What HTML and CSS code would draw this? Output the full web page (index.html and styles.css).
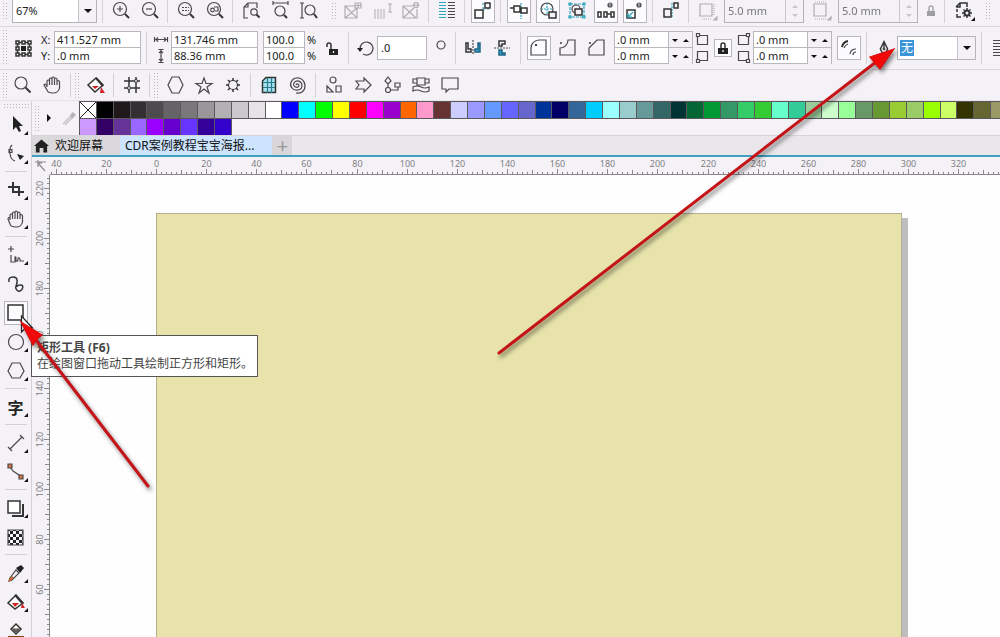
FILE: index.html
```html
<!DOCTYPE html>
<html lang="zh-CN">
<head>
<meta charset="utf-8">
<title>CorelDRAW</title>
<link rel="stylesheet" href="styles.css">
</head>
<body>
<div class="app">
<header class="bars">
  <div class="bar bar-standard" role="toolbar" aria-label="标准">
    <span class="grip"></span>
    <span class="combo combo-zoom"><select class="combo-select" aria-label="缩放级别"><option>67%</option></select><span class="combo-arrow"></span></span>
    <span class="sep"></span>
    <button class="btn" aria-label="放大"><svg viewBox="0 0 24 24"><circle cx="11" cy="10" r="6.5"/><path d="M8 10h6M11 7v6"/><path class="thick" d="M16 15l4 4"/></svg></button>
    <button class="btn" aria-label="缩小"><svg viewBox="0 0 24 24"><circle cx="11" cy="10" r="6.5"/><path d="M8 10h6"/><path class="thick" d="M16 15l4 4"/></svg></button>
    <span class="sep"></span>
    <button class="btn" aria-label="缩放选定对象"><svg viewBox="0 0 24 24"><circle cx="11" cy="10" r="6.5"/><path stroke-dasharray="2 1" d="M8 8.500h7M8 11.500h7"/><path class="thick" d="M16 15l4 4"/></svg></button>
    <button class="btn" aria-label="缩放全部对象"><svg viewBox="0 0 24 24"><circle cx="11" cy="10" r="6.500"/><circle cx="9.500" cy="11" r="1.800"/><path d="M11 8h4v4h-3"/><path class="thick" d="M16 15l4 4"/></svg></button>
    <span class="sep"></span>
    <button class="btn" aria-label="显示页面"><svg viewBox="0 0 24 24"><path d="M9 19H5V8l4-4h9v5M5 8h4V4"/><circle cx="15" cy="13" r="3.200"/><path class="thick" d="M17.500 15.500l3 3"/></svg></button>
    <button class="btn" aria-label="页宽"><svg viewBox="0 0 24 24"><path d="M5 4h15M5 2v4M20 2v4"/><circle cx="12" cy="12" r="5"/><path class="thick" d="M16 16l3 3"/></svg></button>
    <button class="btn" aria-label="页高"><svg viewBox="0 0 24 24"><path d="M5 4v15M3 4h4M3 19h4"/><circle cx="13" cy="11" r="5"/><path class="thick" d="M17 15l3 4"/></svg></button>
    <span class="grip grip-group"></span>
    <button class="btn off" aria-label="添加" disabled><svg viewBox="0 0 24 24"><path d="M15 7H4v12h12V9M4 7l12 12M16 9L4 19M14 4h6v5h-6zM17 4v5M14 6.500h6"/></svg></button>
    <button class="btn off" aria-label="编辑" disabled><svg viewBox="0 0 24 24"><path stroke-dasharray="2 1" d="M4 11h12M4 13h12M4 15h12M4 17h12M4 19h12"/><path d="M18 5h4M20 5v8M18 13h4"/></svg></button>
    <button class="btn off" aria-label="删除" disabled><svg viewBox="0 0 24 24"><path d="M14 7H4v12h14V10M4 7l13 12M15 9L4 19"/><circle cx="17" cy="6" r="2.500"/><path d="M15 6h4"/></svg></button>
    <span class="sep"></span>
    <button class="btn" aria-label="对齐"><svg viewBox="0 0 24 24"><path class="teal" d="M4 3.500h7M4 6.500h7M4 9.500h7M4 12.500h7M4 15.500h7M4 18.500h7"/><path d="M13 3.500h7M13 6.500h7M13 9.500h7M13 12.500h7M13 15.500h7M13 18.500h7"/></svg></button>
    <span class="sep"></span>
    <button class="btn boxed" aria-label="贴齐"><svg viewBox="0 0 24 24"><path class="teal" stroke-dasharray="2 2" d="M12 4v6M12 10h6"/><path class="mid" d="M4 11h8v8H4zM14 4h5v5h-5z"/></svg></button>
    <span class="sep"></span>
    <button class="btn boxed" aria-label="对象贴齐"><svg viewBox="0 0 24 24"><path class="teal" stroke-dasharray="2 1" d="M14 4v16"/><path class="mid" d="M7 7h6v6H7zM14 9h6v5h-6zM3 9h4"/></svg></button>
    <button class="btn boxed" aria-label="相交"><svg viewBox="0 0 24 24"><path class="teal" stroke-dasharray="2 1" d="M11 4v12M5 10h12"/><circle cx="11" cy="10" r="6"/><path class="mid" fill="#f4f2f6" d="M13 13h7v6h-7z"/></svg></button>
    <button class="btn" aria-label="选择框"><svg viewBox="0 0 24 24"><path class="teal" stroke-dasharray="3 1" d="M5 5h14v13H5z"/><circle cx="11" cy="10" r="4"/><path class="mid" fill="#f4f2f6" d="M10 10h7v6h-7z"/><path class="teal" d="M4 4h2v2H4zM18 4h2v2h-2zM4 17h2v2H4zM18 17h2v2h-2z"/></svg></button>
    <button class="btn boxed" aria-label="间距"><svg viewBox="0 0 24 24"><path class="mid" d="M4 13h3v5H4zM10 13h3v5h-3zM17 13h3v5h-3zM13 15h4"/><circle cx="16" cy="6" r="2"/><path d="M14 6h4"/></svg></button>
    <button class="btn boxed" aria-label="尺寸"><svg viewBox="0 0 24 24"><path class="mid" d="M4 11h8v8H4z"/><path class="teal" d="M5 18l5-5M5 14v4h4"/><circle cx="16" cy="6" r="2"/><path d="M14 6h4"/></svg></button>
    <span class="sep"></span>
    <button class="btn" aria-label="边缘"><svg viewBox="0 0 24 24"><path class="teal" stroke-dasharray="2 1" d="M13 4v15"/><path class="mid" d="M5 10h7v8H5zM15 4h4v5h-4z"/></svg></button>
    <span class="sep"></span>
    <button class="btn off" aria-label="水平偏移" disabled><svg viewBox="0 0 24 24"><path d="M5 5h12v12H5z"/><path stroke-dasharray="1 1" d="M19 5v12M7 20h10"/><path d="M22 18v3h-3z"/></svg></button>
    <span class="num off"><input class="num-input" aria-label="水平偏移值" value="5.0 mm" disabled><span class="updown"></span></span>
    <button class="btn off" aria-label="垂直偏移" disabled><svg viewBox="0 0 24 24"><path d="M5 5h12v12H5z"/><path stroke-dasharray="1 1" d="M6 3h11M6 20h11"/><path d="M22 18v3h-3z"/></svg></button>
    <span class="num off"><input class="num-input" aria-label="垂直偏移值" value="5.0 mm" disabled><span class="updown"></span></span>
    <button class="btn slim off" aria-label="锁定偏移" disabled><svg viewBox="0 0 16 24"><path class="mid" d="M6 12V9a2 2 0 0 1 4 0v3"/><path class="fill" d="M4 12h8v5H4z"/></svg></button>
    <span class="sep"></span>
    <button class="btn fly" aria-label="选项"><svg viewBox="0 0 24 24"><path class="mid" d="M10 18H6v-3M6 13v-3M5 8h4V4M5 8l4-4h7v4"/><circle class="thick" cx="16" cy="14" r="2.500"/><path class="mid" d="M16 9v2M16 17v2M11 14h2M19 14h2M12.500 10.500l1 1M18 16l1.500 1.500M19.500 10.500l-1 1M12.500 17.500l1-1"/></svg></button>
    <span class="grip grip-group"></span>
  </div>

  <div class="bar bar-property" role="toolbar" aria-label="属性栏">
    <span class="grip"></span>
    <button class="btn" aria-label="对象原点"><svg viewBox="0 0 24 24"><path class="mid" d="M4 5h3v3H4zM10 5h3v3h-3zM16 5h3v3h-3zM4 11h3v3H4zM16 11h3v3h-3zM4 17h3v3H4zM10 17h3v3h-3zM16 17h3v3h-3zM7 6.500h3M13 6.500h3M7 18.500h3M13 18.500h3M5.500 8v3M5.500 14v3M17.500 8v3M17.500 14v3"/><path class="fill" d="M9 10h5v5H9z"/></svg></button>
    <div class="pair">
      <div class="stack-labels"><label for="pos-x">X:</label><label for="pos-y">Y:</label></div>
      <div class="stack stack-wide"><input id="pos-x" value="411.527 mm"><input id="pos-y" value=".0 mm"></div>
    </div>
    <span class="sep"></span>
    <div class="pair">
      <svg class="size-icon" viewBox="0 0 16 34"><path d="M1.500 6v5M14.500 6v5M2 8.500h12M5 6.500l-2 2 2 2M11 6.500l2 2-2 2M8 19v12M5.500 18.500h5M5.500 31.500h5M6 22l2-2 2 2M6 28l2 2 2-2"/></svg>
      <div class="stack stack-wide"><input aria-label="宽度" value="131.746 mm"><input aria-label="高度" value="88.36 mm"></div>
    </div>
    <div class="pair">
      <div class="stack stack-scale"><input id="scale-x" value="100.0"><input id="scale-y" value="100.0"></div>
      <div class="stack-labels"><label for="scale-x">%</label><label for="scale-y">%</label></div>
    </div>
    <button class="btn narrow" aria-label="锁定比率"><svg viewBox="0 0 20 24"><path class="mid" d="M8 13V9a2 2 0 0 0-4 0v2"/><path class="fill" d="M6 13h9v6H6z"/><path stroke="#fff" d="M10.500 15v2"/></svg></button>
    <span class="sep"></span>
    <div class="pair">
      <button class="btn narrow" aria-label="旋转"><svg viewBox="0 0 20 24"><path d="M5 13a6.500 6.500 0 1 1 3 5"/><path class="fill" d="M2 12h6l-3 4z"/></svg></button>
      <input class="angle" aria-label="旋转角度" value=".0">
    </div>
    <svg class="degree" viewBox="0 0 18 24"><circle cx="9" cy="9" r="4"/></svg>
    <span class="sep"></span>
    <button class="btn" aria-label="水平镜像"><svg viewBox="0 0 24 24"><path class="mid" d="M4 7h2v6h3v3H4z"/><path class="mid blue" d="M18 7h-2v6h-3v3h5z"/><path stroke-dasharray="2 1" d="M11 4v15"/></svg></button>
    <button class="btn" aria-label="垂直镜像"><svg viewBox="0 0 24 24"><path class="mid" d="M14 5H8v5h3V8h3z"/><path class="mid blue" d="M14 19H8v-5h3v3h3z"/><path stroke-dasharray="2 1" d="M3 12h16"/></svg></button>
    <span class="sep"></span>
    <button class="btn boxed" aria-label="圆角"><svg viewBox="0 0 24 24"><path d="M4 19v-7a8 8 0 0 1 8-8h7v15z"/><path class="mid" d="M8 9h2M9 8v2"/></svg></button>
    <button class="btn" aria-label="扇形角"><svg viewBox="0 0 24 24"><path d="M4 19v-7a8 8 0 0 0 8-8h7v15zM4 7h2M5 6v2"/></svg></button>
    <button class="btn" aria-label="倒棱角"><svg viewBox="0 0 24 24"><path d="M4 19v-7l8-8h7v15zM4 7h2M5 6v2"/></svg></button>
    <div class="pair">
      <div class="stack stack-corner"><span class="spin"><input aria-label="左上角半径" value=".0 mm"><i class="down"></i><i class="up"></i></span><span class="spin"><input aria-label="左下角半径" value=".0 mm"><i class="down"></i><i class="up"></i></span></div>
      <svg class="corner-icon" viewBox="0 0 14 34"><path d="M4 4.500h8.500v9h-10V6M4 29.500h8.500v-9h-10V28M1.500 2.500h3v3h-3zM1.500 28.500h3v3h-3z"/></svg>
    </div>
    <button class="btn boxed lock" aria-label="同时编辑所有角"><svg viewBox="0 0 18 18"><path class="mid" d="M7 9V6a2 2 0 0 1 4 0v3"/><path class="fill" d="M4 9h10v6H4z"/><path stroke="#fff" d="M9 11v2"/></svg></button>
    <div class="pair">
      <svg class="corner-icon" viewBox="0 0 14 34"><path d="M10 4.500H1.500v9h10V6M10 29.500H1.500v-9h10V28M9.500 2.500h3v3h-3zM9.500 28.500h3v3h-3z"/></svg>
      <div class="stack stack-corner"><span class="spin"><input aria-label="右上角半径" value=".0 mm"><i class="down"></i><i class="up"></i></span><span class="spin"><input aria-label="右下角半径" value=".0 mm"><i class="down"></i><i class="up"></i></span></div>
    </div>
    <button class="btn boxed" aria-label="相对角缩放"><svg viewBox="0 0 24 24"><path class="thick" d="M5 11q1-5 6-6"/><path d="M7 12q1-3 4-4M13 18q1-5 6-5M16 19q0-3 3-3"/></svg></button>
    <span class="sep"></span>
    <div class="pair">
      <svg class="pen-icon" viewBox="0 0 24 24" role="img" aria-label="轮廓宽度"><path class="mid" d="M12 5l4 8-2 4h-4l-2-4zM12 7v6M9 19h6"/><circle cx="12" cy="13" r="1"/></svg>
      <span class="combo combo-outline"><select class="combo-select" aria-label="轮廓宽度"><option>无</option></select><span class="combo-arrow"></span></span>
    </div>
    <span class="sep"></span>
    <button class="btn" aria-label="文本换行"><svg viewBox="0 0 24 24"><path d="M5 4.500h18M5 7.500h18M5 10.500h18M5 13.500h18M5 16.500h18M5 19.500h18"/></svg></button>
  </div>

  <div class="bar bar-shapes" role="toolbar" aria-label="形状">
    <span class="grip"></span>
    <button class="btn" aria-label="缩放"><svg viewBox="0 0 24 24"><circle cx="9" cy="10" r="6"/><path class="thick" d="M13.500 14.500l5 5"/></svg></button>
    <button class="btn" aria-label="平移"><svg viewBox="0 0 24 24"><path d="M6 14V8q1-2 2.500 0v4V6q1-2 2.500 0v6V5q1-2 2.500 0v7V6q1-2 2.500 0v6V8q2-1 2.500 1v6q-1 5-6.500 5t-6-3l-3-5q1-2 3 1"/></svg></button>
    <span class="sep"></span>
    <span class="grip grip-next"></span>
    <button class="btn" aria-label="填充"><svg viewBox="0 0 24 24"><path class="mid" fill="#fff" d="M12 5l7 7-8 7-7-7z"/><path class="thick" d="M12 5l7 8"/><path class="red" d="M8 13h7l-4 3zM17 14l4 6h-5z"/></svg></button>
    <span class="sep"></span>
    <button class="btn" aria-label="网格"><svg viewBox="0 0 24 24"><path class="mid" d="M4 8h16M4 15h16M9 4v16M16 4v16"/><circle fill="#f4f2f6" cx="16" cy="8" r="1.500"/><circle fill="#f4f2f6" cx="9" cy="15" r="1.500"/></svg></button>
    <span class="sep"></span>
    <span class="grip grip-next"></span>
    <button class="btn" aria-label="多边形"><svg viewBox="0 0 24 24"><path d="M9 4h7l4 8-4 8H9l-4-8z"/></svg></button>
    <button class="btn" aria-label="星形"><svg viewBox="0 0 24 24"><path d="M12 5l2 5.500h6l-5 3.500 2 6-5-4-5 4 2-6-5-3.500h6z"/></svg></button>
    <button class="btn" aria-label="复杂星形"><svg viewBox="0 0 24 24"><circle cx="12" cy="12" r="4.500"/><path class="mid" d="M12 5v3M12 16v3M5 12h3M16 12h3M7 7l2 2M17 7l-2 2M7 17l2-2M17 17l-2-2"/></svg></button>
    <span class="sep"></span>
    <button class="btn" aria-label="图纸"><svg viewBox="0 0 24 24"><path class="mid sky" d="M9 4.500h9.500v15h-13V8z"/><path stroke="#287b91" d="M6 9.500h12M6 14.500h12M10.500 5v15M14.500 5v15"/></svg></button>
    <button class="btn" aria-label="螺纹"><svg viewBox="0 0 24 24"><path d="M10 20c5 1 9-2 9-7 0-6-5-9-9-8-5 1-7 7-4 10 3 4 10 2 10-2 0-5-6-7-8-3-2 3 3 6 5 3 0-2-2-3-3-1"/></svg></button>
    <span class="sep"></span>
    <button class="btn" aria-label="基本形状"><svg viewBox="0 0 24 24"><circle cx="11" cy="7" r="3"/><path d="M5 13v6h6zM14 13h5v6h-5z"/></svg></button>
    <button class="btn" aria-label="箭头形状"><svg viewBox="0 0 24 24"><path d="M5 8h8V5l7 7-7 7v-3H5l3-4z"/></svg></button>
    <button class="btn" aria-label="流程图形状"><svg viewBox="0 0 24 24"><path d="M8 4l3 4-3 3-3-3zM8 11v4M11 17h3M15 10h5v4h-5zM18 14v3h-4"/><circle cx="8" cy="17" r="2.500"/></svg></button>
    <button class="btn" aria-label="标题形状"><svg viewBox="0 0 24 24"><path d="M8 5h8v7H8zM8 6H4v4h4M16 6h4v4h-4M4 14q4-2 8 0t8 0v4q-4 2-8 0t-8 0z"/></svg></button>
    <button class="btn" aria-label="标注形状"><svg viewBox="0 0 24 24"><path d="M4 5h16v11h-9l-3 3v-3H4z"/></svg></button>
  </div>
</header>

<div class="workspace">
  <nav class="toolbox" aria-label="工具箱">
    <span class="grip-row"></span>
    <button class="btn fly" aria-label="选择工具"><svg viewBox="0 0 24 24"><path class="fill" d="M9 3v14l3-3 3 5 2-1-2-5h4z"/></svg></button>
    <button class="btn fly" aria-label="形状工具"><svg viewBox="0 0 24 24"><path d="M8 3q-3 3-2 9t5 7M5 7.500h3v3H5z"/><path class="fill" d="M13 12l7 2-4 4z"/></svg></button>
    <span class="rule"></span>
    <button class="btn fly" aria-label="裁剪工具"><svg viewBox="0 0 24 24"><path class="thick" d="M4 9h11v9M9 4v10h11"/></svg></button>
    <button class="btn fly" aria-label="平移工具"><svg viewBox="0 0 24 24"><path d="M6 13V8q1-2 2.500 0v4V6q1-2 2.500 0v6V5q1-2 2.500 0v7V6q1-2 2.500 0v6V8q2-1 2.500 1v6q-1 5-6.500 5t-6-3l-2-5q0-2 2-1"/></svg></button>
    <span class="rule"></span>
    <button class="btn fly" aria-label="手绘工具"><svg viewBox="0 0 24 24"><path d="M4 6h6M7 3v6M7 12v7h4v-5q1-1 1 2v2q2 1 2-2t2 0v2h4"/></svg></button>
    <button class="btn" aria-label="艺术笔工具"><svg viewBox="0 0 24 24"><path class="mid" d="M5 10q-1-5 4-5c6 0 4 7 3 9s1 6 4 5 4-6 1-6-4 1-4 2"/></svg></button>
    <button class="btn boxed" aria-label="矩形工具"><svg viewBox="0 0 24 24"><path class="mid" d="M4 4h15v15H4z"/></svg></button>
    <button class="btn fly" aria-label="椭圆形工具"><svg viewBox="0 0 24 24"><circle cx="12" cy="12" r="7.500"/></svg></button>
    <button class="btn fly" aria-label="多边形工具"><svg viewBox="0 0 24 24"><path d="M8 4h8l4 8-4 7H8l-4-7z"/></svg></button>
    <span class="rule"></span>
    <button class="btn fly letter" aria-label="文本工具">字</button>
    <span class="rule"></span>
    <button class="btn fly" aria-label="平行度量工具"><svg viewBox="0 0 24 24"><path d="M6 18L18 6M4 16l4 4M16 4l4 4"/></svg></button>
    <button class="btn fly" aria-label="连接器工具"><svg viewBox="0 0 24 24"><path d="M6 7l3 4 9 6"/><path class="node" d="M4 4h4v4H4zM15 15h4v4h-4z"/></svg></button>
    <span class="rule"></span>
    <button class="btn fly" aria-label="阴影工具"><svg viewBox="0 0 24 24"><path class="thick" d="M19 8v12H8"/><path class="mid" fill="#fff" d="M4 5h12v12H4z"/></svg></button>
    <button class="btn" aria-label="透明度工具"><svg viewBox="0 0 24 24"><defs><pattern id="check" width="6" height="6" patternUnits="userSpaceOnUse"><path class="fill" d="M0 0h3v3H0zM3 3h3v3H3z"/></pattern></defs><path fill="url(#check)" d="M4 5h15v15H4z"/></svg></button>
    <span class="rule"></span>
    <button class="btn fly" aria-label="颜色滴管工具"><svg viewBox="0 0 24 24"><path d="M12 9l3 3-7 7-3 1 1-3z"/><path class="fill" d="M12 7l5-3 3 3-4 5z"/><path stroke="#ca6028" stroke-width="2" d="M5 20l4-4"/></svg></button>
    <button class="btn fly" aria-label="交互式填充工具"><svg viewBox="0 0 24 24"><path class="mid" fill="#fff" d="M12 5l7 8-8 6-7-6z"/><path class="thick" d="M11 5l8 9"/><path class="red" d="M8 13h7l-4 4zM18 13l3 5h-4z"/></svg></button>
    <button class="btn" aria-label="智能填充工具"><svg viewBox="0 0 24 24"><path class="mid" fill="#fff" d="M12 5l5 5-5 5-5-5z"/><path fill="#b98a55" d="M9 10h6l-3 3z"/><path stroke="#8b441f" stroke-width="4" d="M4 19h16"/></svg></button>
  </nav>

  <main class="document">
    <section class="palette" aria-label="调色板">
      <span class="grip"></span>
      <span class="palette-menu"></span>
      <svg class="dropper" viewBox="0 0 16 16"><path d="M2 14l8-8M4 15l7-7"/><path class="fill" d="M9 5l3-3 3 3-4 4z"/></svg>
      <div class="swatches" id="swatches"></div>
    </section>
    <div class="tabs">
      <a class="tab tab-home" href="#welcome"><svg class="home" viewBox="0 0 16 16"><path class="fill" d="M8 1l8 7h-2v7h-4v-5H6v5H2V8H0z"/></svg>欢迎屏幕</a>
      <a class="tab tab-open" href="#drawing">CDR案例教程宝宝海报...</a>
      <button class="tab-add" aria-label="新建">+</button>
    </div>
    <div class="view">
      <svg class="origin" viewBox="0 0 17 18"><path d="M3 5h11M6 3v5M6 6l7 8M6 10V6h4"/></svg>
      <svg class="ruler ruler-h" id="ruler-h"></svg>
      <svg class="ruler ruler-v" id="ruler-v"></svg>
      <div class="canvas"><div class="sheet"></div></div>
    </div>
  </main>
</div>

<div class="tooltip" role="tooltip"><strong>矩形工具 (F6)</strong><span>在绘图窗口拖动工具绘制正方形和矩形。</span></div>
<svg class="arrows" viewBox="0 0 1000 637">
  <path class="cursor" d="M21.500 316v16l4-4h7z"/>
  <g class="arrow">
    <path class="shaft" d="M148 486L36 340M499 353L876 62"/>
    <path class="head" d="M21 322l21 13-5 4-4 6zM894 49l-24 8 5 6 5 6z"/>
  </g>
</svg>
</div>
<script src="app.js"></script>
</body>
</html>
```
FILE: styles.css
```css
* { box-sizing: border-box; }

body {
  margin: 0;
  font: 11px/16px "Noto Sans", "Noto Sans CJK SC", sans-serif;
  color: #222;
}

.app {
  position: relative;
  display: flex;
  flex-direction: column;
  height: 100vh;
  overflow: hidden;
  background: #f4f2f6;
}

svg {
  display: block;
  flex: none;
  fill: none;
  stroke: #4a484d;
  stroke-width: 1.2;
}
.mid { stroke: #333; stroke-width: 1.5; }
.thick { stroke: #333; stroke-width: 2; }
.teal { stroke: #2aa5bd; }
.blue { fill: #369fca; stroke: #1d6685; }
.sky { fill: #a6e3ee; }
.node { fill: #dd7542; }
.fill { fill: #222; stroke: none; }
.red { fill: #d02222; stroke: none; }

/* Toolbars */
.bar {
  display: flex;
  align-items: center;
  gap: 5px;
  padding-left: 2px;
  border-bottom: 1px solid #dad8dc;
  overflow: hidden;
}
.bar > * { flex: none; }
.bar-standard { height: 27px; padding-bottom: 4px; }
.bar-property { height: 43px; padding-bottom: 1px; }
.bar-shapes { height: 31px; border-color: #e6e4e8; }

.grip {
  width: 5px;
  align-self: stretch;
  margin: 2px 0;
  background: radial-gradient(circle, #bbb9bd 1px, transparent 1px) 0 0 / 3px 3px;
}
.grip-group { margin-left: 5px; }
.grip-next { margin-left: -3px; }

.sep {
  width: 2px;
  height: 24px;
  border-left: 1px solid #d3d1d5;
}
.bar-property .sep { height: 32px; }

.btn {
  position: relative;
  width: 24px;
  height: 24px;
  flex: none;
  padding: 0;
  border: 0;
  background: none;
  color: #222;
}
.btn svg { width: 100%; height: 100%; }
.boxed { background: #fcfbfd; outline: 1px solid #b9b7bb; outline-offset: -1px; }
.narrow { width: 20px; }
.slim { width: 16px; }
.lock { width: 18px; height: 18px; }
.off { opacity: 0.4; }
.fly::after {
  content: "";
  position: absolute;
  right: 0;
  bottom: 2px;
  border: 2px solid #111;
  border-top-color: transparent;
  border-left-color: transparent;
}

input, select {
  font: inherit;
  color: #222;
  border: 0;
  border-radius: 0;
  outline: 0;
  min-width: 0;
}

.combo {
  display: flex;
  height: 24px;
  background: #fff;
  border: 1px solid #b5b3b7;
}
.combo-select {
  flex: 1;
  appearance: none;
  background: transparent;
  padding: 0 3px;
}
.combo-zoom { width: 85px; }
.combo-outline { width: 79px; }
.combo-outline .combo-select {
  font-size: 12px;
  color: #fff;
  background: linear-gradient(#3b96d9, #3b96d9) 2px center / 14px 16px no-repeat;
}
.combo-arrow {
  width: 18px;
  display: grid;
  place-items: center;
  background: #f4f2f6;
  border-left: 1px solid #c5c3c7;
  pointer-events: none;
}
.combo-arrow::before {
  content: "";
  border: 4px solid transparent;
  border-top-color: #111;
  border-bottom: 0;
}

.num { display: flex; width: 80px; height: 24px; border: 1px solid #8d8b8f; }
.num.off { opacity: 0.6; }
.num-input { flex: 1; padding: 0 3px; background: transparent; }
.updown {
  display: flex;
  flex-direction: column;
  align-items: center;
  justify-content: space-evenly;
  width: 18px;
  border-left: 1px solid #aaa;
}
.updown::before, .updown::after {
  content: "";
  border: 3px solid transparent;
}
.updown::before { border-bottom-color: #aaa; border-top: 0; }
.updown::after { border-top-color: #aaa; border-bottom: 0; }

.pair { display: flex; align-items: center; gap: 2px; }
.stack {
  display: grid;
  grid-template-rows: 15px 16px;
  border: 1px solid #b9b7bb;
  background: #fff;
}
.stack > * { width: 100%; }
.stack > :last-child { border-top: 1px solid #b9b7bb; }
.stack input { padding: 0 2px; background: transparent; }
.stack-wide { width: 87px; }
.stack-scale { width: 42px; }
.stack-corner { width: 79px; }
.stack-labels { display: grid; grid-template-rows: 16px 16px; width: 11px; }
.spin { display: grid; grid-template-columns: 1fr 12px 12px; }
.spin i {
  display: grid;
  place-items: center;
  background: #f4f2f6;
}
.spin .down { border-left: 1px solid #b9b7bb; }
.spin i::before { content: ""; border: 3px solid transparent; }
.spin .down::before { border-top-color: #111; border-bottom: 0; }
.spin .up::before { border-bottom-color: #111; border-top: 0; }
.size-icon { width: 16px; height: 34px; }
.corner-icon { width: 14px; height: 34px; }
.pen-icon { width: 22px; height: 24px; }
.degree { width: 18px; height: 24px; }
.angle {
  width: 50px;
  height: 24px;
  padding: 0 3px;
  background: #fff;
  border: 1px solid #b9b7bb;
}

/* Toolbox */
.workspace { display: flex; flex: 1; min-height: 0; }
.toolbox {
  display: flex;
  flex-direction: column;
  align-items: center;
  gap: 5px;
  width: 32px;
  flex: none;
  padding-top: 2px;
  overflow: hidden;
  border-right: 1px solid #d3d1d5;
}
.grip-row {
  width: 26px;
  height: 5px;
  flex: none;
  background: radial-gradient(circle, #bbb9bd 1px, transparent 1px) 0 0 / 3px 3px;
}
.rule { width: 22px; height: 2px; flex: none; border-top: 1px solid #d3d1d5; }
.letter { font: bold 16px/24px "Noto Sans CJK SC", sans-serif; }

/* Document area */
.document { display: flex; flex-direction: column; flex: 1; min-width: 0; }
.palette {
  display: flex;
  align-items: center;
  height: 35px;
  overflow: hidden;
  border-bottom: 1px solid #d6d4d8;
}
.palette > .grip { margin: 4px 8px 4px 2px; }
.palette-menu {
  border: 4px solid transparent;
  border-left-color: #111;
  border-right: 0;
}
.dropper { width: 16px; height: 16px; margin: 0 2px 0 10px; opacity: 0.3; }
.swatches {
  display: grid;
  grid-template-columns: repeat(55, 1fr);
  grid-auto-rows: 17px;
  flex: 1;
  margin-right: -7px;
}
.swatch {
  padding: 0;
  border: 1px solid #5b595d;
  border-width: 1px 0 0 1px;
  box-shadow: 1px 1px 0 #5b595d;
}
.swatch-none {
  background:
    linear-gradient(45deg, transparent 48%, #222 48%, #222 52%, transparent 52%),
    linear-gradient(-45deg, #fff 48%, #222 48%, #222 52%, #fff 52%);
}

.tabs {
  display: flex;
  height: 21px;
  background: #e9e7ea;
  border-bottom: 2px solid #3f9fbd;
}
.tab {
  display: flex;
  align-items: center;
  font-size: 12px;
  color: #111;
  text-decoration: none;
}
.tab-home { gap: 6px; padding: 0 17px 0 2px; background: #dad8db; }
.tab-open { padding: 0 18px 0 5px; background: #cce4ff; }
.home { width: 15px; height: 16px; }
.tab-add {
  width: 20px;
  padding: 0;
  border: 0;
  background: #d8d6d9;
  color: #99979b;
  font: 20px/18px "Noto Sans", sans-serif;
}

.view {
  display: grid;
  grid-template: 18px 1fr / 18px 1fr;
  flex: 1;
  min-height: 0;
}
.origin { width: 17px; height: 18px; opacity: 0.6; }
.ruler { width: 100%; height: 100%; stroke: #8b898d; stroke-width: 1; overflow: hidden; }
.ruler-h { border-bottom: 1px solid #8b898d; }
.ruler-v { border-right: 1px solid #8b898d; }
.ruler text {
  fill: #818085;
  stroke: none;
  font-size: 9px;
  text-anchor: middle;
}
.canvas { background: #fefefe; overflow: hidden; display: flex; }
.sheet {
  flex: 1;
  margin: 38px 98px 0 106px;
  background: #e7e3ab;
  border: 1px solid #b4b190;
  border-bottom: 0;
  box-shadow: 6px 5px 0 #bfbcc0;
}

/* Overlays */
.tooltip {
  position: absolute;
  left: 31px;
  top: 335px;
  display: flex;
  flex-direction: column;
  padding: 4px 4px 4px 5px;
  background: #fff;
  border: 1px solid #555;
  color: #444;
  font-size: 12px;
  white-space: nowrap;
}
.arrows {
  position: absolute;
  left: 0;
  top: 0;
  width: 1000px;
  height: 637px;
  pointer-events: none;
}
.cursor { fill: #fff; stroke: #222; }
.arrow { filter: drop-shadow(2px 3px 2px rgba(0, 0, 0, 0.5)); }
.shaft { stroke: #c41418; stroke-width: 3; stroke-linecap: round; }
.head { fill: #f00a0a; stroke: #e00a0a; }
```
FILE: app.js
```js
const colors = [
  'none 000 1f191b 333033 4d4b4d 666366 7a787a 999799 b3b1b3 cbc8cb e6e3e6 fff 00f 0ff 0f0 ff0 f00 f0f 90c f60 f9c',
  '633 ccf 99f 69f 66f 66c 039 006 369 0cf 9ff 9cc 699 366 033 063 093 396 3c6 3c3 6fc 3c9 9c9 cfc 9f9 696 693',
  '9c3 9c6 9f0 cf6 330 663 996 c9f 306 639 96f 90f 60c 63f 309 30c'
].join(' ').split(' ');

const swatches = document.getElementById('swatches');
for (const color of colors) {
  const button = document.createElement('button');
  button.className = 'swatch';
  button.setAttribute('aria-label', color);
  if (color === 'none') button.classList.add('swatch-none');
  else button.style.background = '#' + color;
  swatches.append(button);
}

// Rulers: a label every 20 mm, a tick every 2 mm
const PX_PER_MM = 2.507;

function draw(parent, name, attributes, text) {
  const node = document.createElementNS('http://www.w3.org/2000/svg', name);
  for (const key in attributes) node.setAttribute(key, attributes[key]);
  if (text !== undefined) node.textContent = text;
  parent.append(node);
}

function tickLength(mm) {
  return mm % 20 === 0 ? 5 : mm % 10 === 0 ? 4 : 2;
}

const horizontal = document.getElementById('ruler-h');
const width = horizontal.getBoundingClientRect().width;
for (let mm = -42; 106 + mm * PX_PER_MM < width; mm += 2) {
  const x = Math.round(106 + mm * PX_PER_MM) + 0.5;
  draw(horizontal, 'path', { d: `M${x} 17v-${tickLength(mm)}` });
  if (mm % 20 === 0) draw(horizontal, 'text', { x, y: 10 }, Math.abs(mm));
}

const vertical = document.getElementById('ruler-v');
const height = vertical.getBoundingClientRect().height;
for (let mm = 224; 63 + (200 - mm) * PX_PER_MM < height; mm -= 2) {
  const y = Math.round(63 + (200 - mm) * PX_PER_MM) + 0.5;
  draw(vertical, 'path', { d: `M17 ${y}h-${tickLength(mm)}` });
  if (mm % 20 === 0) draw(vertical, 'text', { x: 11, y, transform: `rotate(-90 11 ${y})` }, Math.abs(mm));
}
```
